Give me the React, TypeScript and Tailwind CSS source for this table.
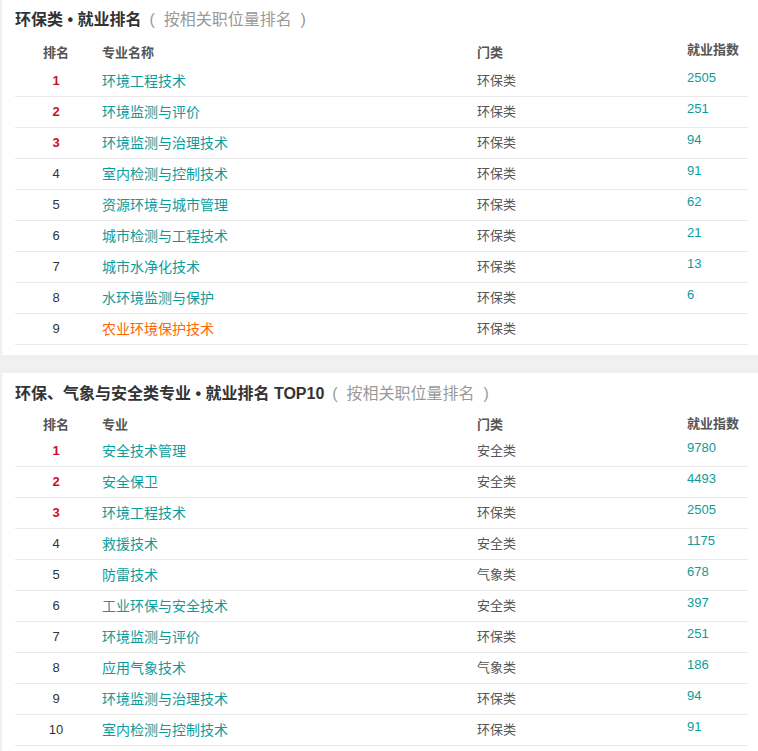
type Row = { rank: number; name: string; cat: string; idx?: string; hot?: boolean };

const first: Row[] = [
  { rank: 1, name: "环境工程技术", cat: "环保类", idx: "2505" },
  { rank: 2, name: "环境监测与评价", cat: "环保类", idx: "251" },
  { rank: 3, name: "环境监测与治理技术", cat: "环保类", idx: "94" },
  { rank: 4, name: "室内检测与控制技术", cat: "环保类", idx: "91" },
  { rank: 5, name: "资源环境与城市管理", cat: "环保类", idx: "62" },
  { rank: 6, name: "城市检测与工程技术", cat: "环保类", idx: "21" },
  { rank: 7, name: "城市水净化技术", cat: "环保类", idx: "13" },
  { rank: 8, name: "水环境监测与保护", cat: "环保类", idx: "6" },
  { rank: 9, name: "农业环境保护技术", cat: "环保类", hot: true },
];

const second: Row[] = [
  { rank: 1, name: "安全技术管理", cat: "安全类", idx: "9780" },
  { rank: 2, name: "安全保卫", cat: "安全类", idx: "4493" },
  { rank: 3, name: "环境工程技术", cat: "环保类", idx: "2505" },
  { rank: 4, name: "救援技术", cat: "安全类", idx: "1175" },
  { rank: 5, name: "防雷技术", cat: "气象类", idx: "678" },
  { rank: 6, name: "工业环保与安全技术", cat: "安全类", idx: "397" },
  { rank: 7, name: "环境监测与评价", cat: "环保类", idx: "251" },
  { rank: 8, name: "应用气象技术", cat: "气象类", idx: "186" },
  { rank: 9, name: "环境监测与治理技术", cat: "环保类", idx: "94" },
  { rank: 10, name: "室内检测与控制技术", cat: "环保类", idx: "91" },
];

const cols = "grid grid-cols-[82px_375px_210px_1fr]";

function Panel({
  title,
  nameHead,
  rows,
  headH,
  className,
}: {
  title: string;
  nameHead: string;
  rows: Row[];
  headH: string;
  className: string;
}) {
  return (
    <section className={`bg-white pl-[13px] pr-[10px] ${className}`}>
      <h2 className="h-10 flex items-center text-[16px] font-bold text-[#333]">
        {title}
        <span className="ml-[8px] font-normal text-[#999] whitespace-pre">(  按相关职位量排名  )</span>
      </h2>

      {/* header */}
      <div className={`${cols} ${headH} text-[13px] font-bold text-[#555]`}>
        <div className="flex items-center justify-center">排名</div>
        <div className="flex items-center pl-[5px]">{nameHead}</div>
        <div className="flex items-center pl-[5px]">门类</div>
        <div className="pl-[5px]">就业指数</div>
      </div>

      {rows.map((r) => (
        <div key={r.rank} className={`${cols} h-[31px] border-b border-[#e9e9e9] text-[13px]`}>
          <div
            className={`flex items-center justify-center ${
              r.rank <= 3 ? "text-[#c8102e] font-bold" : "text-[#333]"
            }`}
          >
            {r.rank}
          </div>
          <div
            className={`flex items-center pl-[5px] text-[14px] ${r.hot ? "text-[#ff6600]" : "text-[#0c9c9c]"}`}
          >
            {r.name}
          </div>
          <div className="flex items-center pl-[5px] text-[#555]">{r.cat}</div>
          <div className="pl-[5px] pt-[2px] text-[#0c9c9c]">{r.idx}</div>
        </div>
      ))}
    </section>
  );
}

export default function App() {
  return (
    <div
      className="min-h-[751px] bg-[#f0f0f0] pl-[2px]"
      style={{ fontFamily: '"Liberation Sans", "Noto Sans CJK SC", sans-serif' }}
    >
      <Panel
        title="环保类 • 就业排名"
        nameHead="专业名称"
        rows={first}
        headH="h-[26px]"
        className="pb-[10px]"
      />
      <div className="h-[18px]" />
      <Panel
        title="环保、气象与安全类专业 • 就业排名 TOP10"
        nameHead="专业"
        rows={second}
        headH="h-[22px]"
        className="pt-[1px] pb-[10px]"
      />
    </div>
  );
}
